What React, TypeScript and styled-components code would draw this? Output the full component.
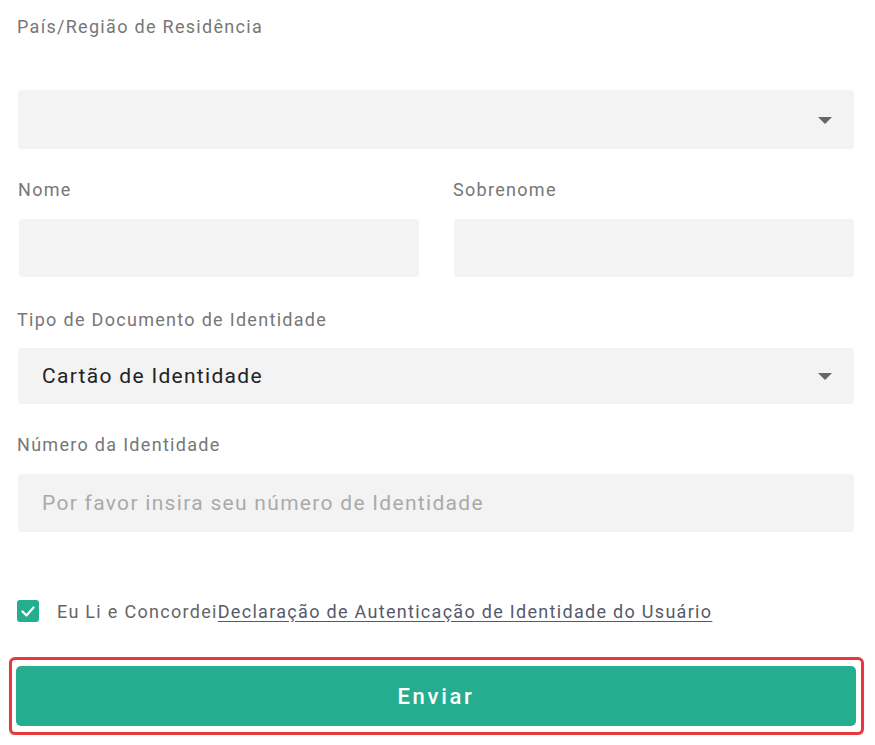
import styled, { createGlobalStyle } from 'styled-components';

const GlobalStyle = createGlobalStyle`
  body {
    margin: 0;
    background: #ffffff;
    font-family: Roboto, 'Noto Sans', sans-serif;
  }
`;

const Form = styled.div`
  display: flex;
  flex-direction: column;
  width: 837px;
  padding: 15px 0 0 17px;
`;

const Field = styled.div<{ gap: number; top: number }>`
  display: flex;
  flex-direction: column;
  flex: 1;
  margin-top: ${(p) => p.top}px;

  & > label {
    margin-bottom: ${(p) => p.gap}px;
  }
`;

const Row = styled.div`
  display: flex;
  gap: 34px;
  padding-left: 1px;
`;

const Label = styled.label`
  font-size: 18px;
  line-height: 24px;
  color: #777777;
  letter-spacing: 1.3px;
`;

const Box = styled.div<{ h: number }>`
  position: relative;
  display: flex;
  align-items: center;
  height: ${(p) => p.h}px;
  margin-left: 1px;
  padding: 0 24px;
  background: #f3f3f3;
  border-radius: 4px;
  font-size: 21px;
  letter-spacing: 1.3px;
`;

const Value = styled.span`
  color: #222222;
`;

const Placeholder = styled.span`
  color: #aaaaaa;
`;

const Arrow = styled.span`
  position: absolute;
  right: 22px;
  top: 50%;
  margin-top: -3px;
  width: 0;
  height: 0;
  border-left: 7px solid transparent;
  border-right: 7px solid transparent;
  border-top: 7px solid #666666;
`;

const Agree = styled.div`
  display: flex;
  align-items: center;
  gap: 18px;
  margin-top: 68px;
  font-size: 18px;
  letter-spacing: 1.3px;
  color: #666666;
`;

const Check = styled.span`
  display: flex;
  align-items: center;
  justify-content: center;
  width: 22px;
  height: 22px;
  background: #25ad8f;
  border-radius: 3px;
`;

const Terms = styled.a`
  color: #555a6b;
  text-decoration: underline;
  text-underline-offset: 3px;
`;

const Highlight = styled.div`
  align-self: flex-start;
  margin: 35px 0 0 -8px;
  padding: 6px 5px 6px 4px;
  border: 3px solid #e8383b;
  border-radius: 6px;
  box-shadow: 0 1px 1px rgba(0, 0, 0, 0.25);
`;

const Submit = styled.button`
  display: block;
  width: 840px;
  height: 60px;
  border: none;
  border-radius: 5px;
  background: #25ad8f;
  color: #ffffff;
  font-family: Roboto, 'Noto Sans', sans-serif;
  font-size: 22px;
  font-weight: 500;
  letter-spacing: 2.7px;
`;

const App = () => (
  <>
    <GlobalStyle />
    <Form>
      <Field top={0} gap={51}>
        <Label>País/Região de Residência</Label>
        <Box h={59}>
          <Arrow />
        </Box>
      </Field>
      <Row>
        <Field top={29} gap={17}>
          <Label>Nome</Label>
          <Box h={58} />
        </Field>
        <Field top={29} gap={17}>
          <Label>Sobrenome</Label>
          <Box h={58} />
        </Field>
      </Row>
      <Field top={31} gap={16}>
        <Label>Tipo de Documento de Identidade</Label>
        <Box h={56}>
          <Value>Cartão de Identidade</Value>
          <Arrow />
        </Box>
      </Field>
      <Field top={29} gap={17}>
        <Label>Número da Identidade</Label>
        <Box h={58}>
          <Placeholder>Por favor insira seu número de Identidade</Placeholder>
        </Box>
      </Field>
      <Agree>
        <Check>
          <svg width="14" height="11" viewBox="0 0 14 11" fill="none">
            <path d="M1.5 5.5l4 4 7-8" stroke="#ffffff" strokeWidth="2.2" strokeLinecap="round" strokeLinejoin="round" />
          </svg>
        </Check>
        <span>
          Eu Li e Concordei<Terms>Declaração de Autenticação de Identidade do Usuário</Terms>
        </span>
      </Agree>
      <Highlight>
        <Submit>Enviar</Submit>
      </Highlight>
    </Form>
  </>
);

export default App;
